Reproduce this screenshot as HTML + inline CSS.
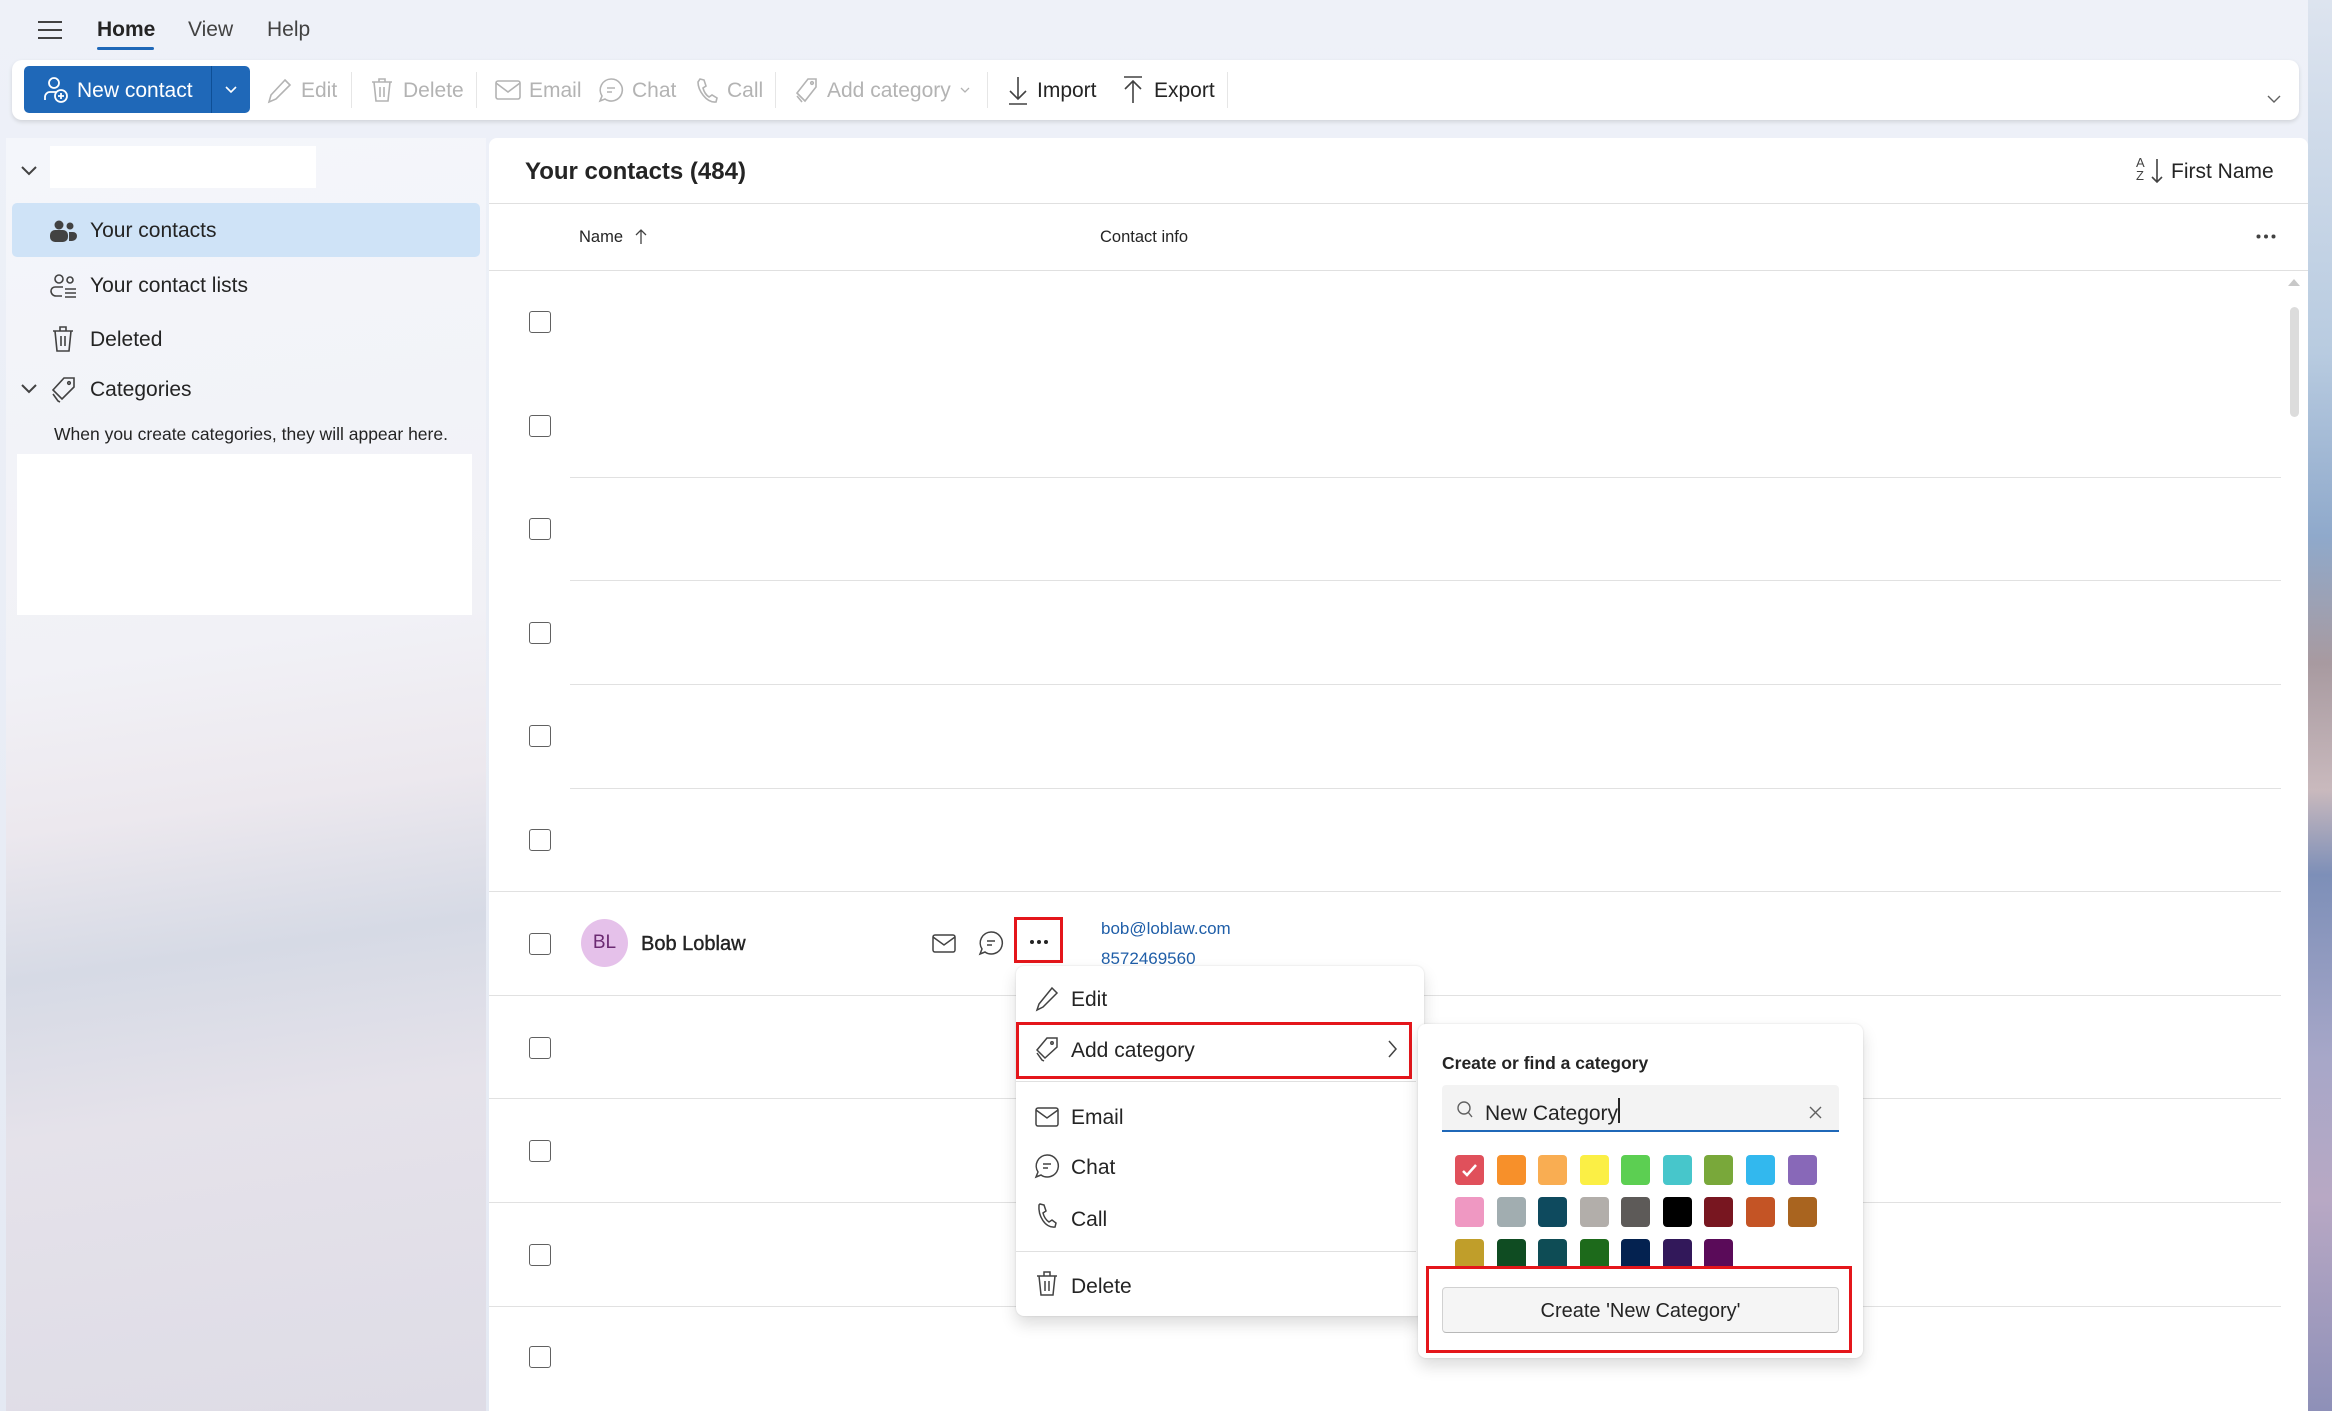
<!DOCTYPE html>
<html><head><meta charset="utf-8"><style>
*{box-sizing:border-box;margin:0;padding:0}
body{width:2332px;height:1411px;overflow:hidden;position:relative;font-family:"Segoe UI","Liberation Sans",sans-serif;color:#242424;background:linear-gradient(180deg,#eef1f8 0%,#e4e9f3 100%)}
.a{position:absolute}
.t{position:absolute;white-space:nowrap;line-height:1}
.dis{color:#b3b3b3}
svg{position:absolute;overflow:visible}
.row{position:absolute;left:489px;width:1792px;height:1px;background:#e1e1e1}
.row.s{left:570px;width:1711px}
.cb{position:absolute;left:529px;width:22px;height:22px;border:1.5px solid #616161;border-radius:3px;background:#fff}
.sw{position:absolute;width:29px;height:30px;border-radius:4px}
.mi{font-size:21px}
</style></head><body>
<div class="a" style="left:2308px;top:0;width:24px;height:1411px;background:linear-gradient(180deg,#dde4ef 0%,#b8cbe0 25%,#8fa9cb 38%,#a89aa0 47%,#c9b9bd 56%,#7d8fb8 62%,#a7a7c8 75%,#b8a8c4 85%,#8e90b8 100%)"></div>
<div class="a" style="left:38px;top:21px;width:24px;height:2px;background:#424242"></div>
<div class="a" style="left:38px;top:29px;width:24px;height:2px;background:#424242"></div>
<div class="a" style="left:38px;top:37px;width:24px;height:2px;background:#424242"></div>
<div class="t" style="left:97px;top:19px;font-size:21px;font-weight:600">Home</div>
<div class="a" style="left:97px;top:47px;width:57px;height:3px;border-radius:2px;background:#1f68b8"></div>
<div class="t" style="left:188px;top:19px;font-size:21px;color:#424242">View</div>
<div class="t" style="left:267px;top:19px;font-size:21px;color:#424242">Help</div>
<div class="a" style="left:12px;top:60px;width:2287px;height:60px;background:#fff;border-radius:10px;box-shadow:0 2px 4px rgba(0,0,0,.12)"></div>
<div class="a" style="left:24px;top:66px;width:226px;height:47px;background:#1f68b8;border-radius:5px"></div>
<div class="a" style="left:211px;top:66px;width:1px;height:47px;background:#0e4f96"></div>
<svg style="left:42px;top:76px" width="28" height="28" viewBox="0 0 28 28" fill="none" stroke="#fff" stroke-width="1.8"><circle cx="12" cy="7" r="5"/><path d="M3 24v-3a5 5 0 0 1 5-5h6"/><circle cx="19" cy="20" r="6" fill="#1f68b8"/><path d="M19 17v6M16 20h6"/></svg>
<div class="t" style="left:77px;top:80px;font-size:21px;color:#fff">New contact</div>
<svg style="left:225px;top:86px" width="12" height="8" viewBox="0 0 12 8" fill="none" stroke="#fff" stroke-width="1.6"><path d="M1 1l5 5 5-5"/></svg>
<svg style="left:267px;top:77px" width="26" height="28" viewBox="0 0 26 28" fill="none" stroke="#b3b3b3" stroke-width="1.6"><path d="M18 3l5 5L9 22l-7 3 2-7z"/></svg>
<div class="t dis" style="left:301px;top:80px;font-size:21px">Edit</div>
<div class="a" style="left:351px;top:72px;width:1px;height:36px;background:#e6e6e6"></div>
<svg style="left:370px;top:76px" width="24" height="28" viewBox="0 0 24 28" fill="none" stroke="#b3b3b3" stroke-width="1.6"><path d="M2 6h20M9 6V3h6v3M4 6l2 19h12l2-19M10 11v10M14 11v10"/></svg>
<div class="t dis" style="left:403px;top:80px;font-size:21px">Delete</div>
<div class="a" style="left:476px;top:72px;width:1px;height:36px;background:#e6e6e6"></div>
<svg style="left:495px;top:80px" width="26" height="20" viewBox="0 0 26 20" fill="none" stroke="#b3b3b3" stroke-width="1.6"><rect x="1" y="1" width="24" height="18" rx="2"/><path d="M1 3l12 9 12-9"/></svg>
<div class="t dis" style="left:529px;top:80px;font-size:21px">Email</div>
<svg style="left:598px;top:77px" width="26" height="26" viewBox="0 0 26 26" fill="none" stroke="#b3b3b3" stroke-width="1.6"><path d="M13 2a11 11 0 1 1-6 20l-5 2 2-5A11 11 0 0 1 13 2z"/><path d="M9 11h8M9 15h5"/></svg>
<div class="t dis" style="left:632px;top:80px;font-size:21px">Chat</div>
<svg style="left:695px;top:77px" width="24" height="28" viewBox="0 0 24 28" fill="none" stroke="#b3b3b3" stroke-width="1.6"><path d="M5 2l4 1 2 6-3 2c1 4 3 7 6 9l3-2 5 3-1 4c-10 1-18-12-18-20z"/></svg>
<div class="t dis" style="left:727px;top:80px;font-size:21px">Call</div>
<div class="a" style="left:775px;top:72px;width:1px;height:36px;background:#e6e6e6"></div>
<svg style="left:794px;top:77px" width="26" height="28" viewBox="0 0 26 28" fill="none" stroke="#b3b3b3" stroke-width="1.6"><path d="M14 2h8v8L11 24 3 16z"/><circle cx="18" cy="6" r="1.3"/><path d="M3 19l5 6"/></svg>
<div class="t dis" style="left:827px;top:80px;font-size:21px">Add category</div>
<svg style="left:960px;top:87px" width="10" height="6" viewBox="0 0 10 6" fill="none" stroke="#b3b3b3" stroke-width="1.3"><path d="M1 1l4 4 4-4"/></svg>
<div class="a" style="left:987px;top:72px;width:1px;height:36px;background:#e6e6e6"></div>
<svg style="left:1007px;top:75px" width="22" height="30" viewBox="0 0 22 30" fill="none" stroke="#424242" stroke-width="1.6"><path d="M11 2v22M3 16l8 8 8-8M2 29h18"/></svg>
<div class="t" style="left:1037px;top:80px;font-size:21px">Import</div>
<svg style="left:1122px;top:75px" width="22" height="30" viewBox="0 0 22 30" fill="none" stroke="#424242" stroke-width="1.6"><path d="M2 2h18M11 6v22M3 14l8-8 8 8"/></svg>
<div class="t" style="left:1154px;top:80px;font-size:21px">Export</div>
<div class="a" style="left:1227px;top:72px;width:1px;height:36px;background:#e6e6e6"></div>
<svg style="left:2267px;top:95px" width="14" height="8" viewBox="0 0 14 8" fill="none" stroke="#616161" stroke-width="1.4"><path d="M1 1l6 6 6-6"/></svg>
<div class="a" style="left:6px;top:138px;width:480px;height:1273px;background:linear-gradient(172deg,#f4f6fb 0%,#f1f1f6 40%,#ece8ee 52%,#d6dae5 63%,#e5e2ea 75%,#dedce6 100%)"></div>
<svg style="left:21px;top:166px" width="16" height="10" viewBox="0 0 16 10" fill="none" stroke="#424242" stroke-width="2"><path d="M1 1l7 7 7-7"/></svg>
<div class="a" style="left:50px;top:146px;width:266px;height:42px;background:#fff"></div>
<div class="a" style="left:12px;top:203px;width:468px;height:54px;background:#cfe3f7;border-radius:5px"></div>
<svg style="left:50px;top:220px" width="27" height="22" viewBox="0 0 27 22" fill="#424242"><circle cx="9" cy="5" r="4.5"/><circle cx="20" cy="6" r="3.5"/><path d="M0 15a5 5 0 0 1 5-5h8a5 5 0 0 1 5 5v2a5 5 0 0 1-5 5H5a5 5 0 0 1-5-5z"/><path d="M19 12h4a4 4 0 0 1 4 4 5 5 0 0 1-5 5h-3z"/></svg>
<div class="t" style="left:90px;top:220px;font-size:21px">Your contacts</div>
<svg style="left:50px;top:274px" width="27" height="24" viewBox="0 0 27 24" fill="none" stroke="#424242" stroke-width="1.6"><circle cx="9" cy="5" r="4"/><circle cx="20" cy="6" r="3"/><path d="M12 22H6a5 5 0 0 1-5-5 4 4 0 0 1 4-4h8"/><path d="M15 15h11M15 19h11M15 23h11"/></svg>
<div class="t" style="left:90px;top:275px;font-size:21px">Your contact lists</div>
<svg style="left:52px;top:325px" width="22" height="28" viewBox="0 0 22 28" fill="none" stroke="#424242" stroke-width="1.6"><path d="M1 6h20M8 6V2h6v4M3 6l2 20h12l2-20M9 11v10M13 11v10"/></svg>
<div class="t" style="left:90px;top:329px;font-size:21px">Deleted</div>
<svg style="left:21px;top:384px" width="16" height="10" viewBox="0 0 16 10" fill="none" stroke="#424242" stroke-width="2"><path d="M1 1l7 7 7-7"/></svg>
<svg style="left:51px;top:377px" width="25" height="27" viewBox="0 0 25 27" fill="none" stroke="#424242" stroke-width="1.6"><path d="M13 1h10v9L11 22 2 13z"/><circle cx="18" cy="6" r="1.3"/><path d="M2 17l5 7 2 1"/></svg>
<div class="t" style="left:90px;top:379px;font-size:21px">Categories</div>
<div class="t" style="left:54px;top:426px;font-size:17.5px">When you create categories, they will appear here.</div>
<div class="a" style="left:17px;top:454px;width:455px;height:161px;background:#fff"></div>
<div class="a" style="left:489px;top:138px;width:1819px;height:1273px;background:#fff;border-radius:8px 8px 0 0"></div>
<div class="t" style="left:525px;top:160px;font-size:24px;font-weight:600">Your contacts (484)</div>
<div class="t" style="left:2136px;top:156px;font-size:13px;line-height:13px;color:#424242">A<br>Z</div>
<svg style="left:2151px;top:158px" width="12" height="26" viewBox="0 0 12 26" fill="none" stroke="#424242" stroke-width="1.6"><path d="M6 1v23M1 19l5 5 5-5"/></svg>
<div class="t" style="left:2171px;top:161px;font-size:21px">First Name</div>
<div class="a" style="left:489px;top:203px;width:1819px;height:1px;background:#e0e0e0"></div>
<div class="t" style="left:579px;top:229px;font-size:16.5px">Name</div>
<svg style="left:635px;top:229px" width="12" height="16" viewBox="0 0 12 16" fill="none" stroke="#424242" stroke-width="1.3"><path d="M6 15V1M1 6l5-5 5 5"/></svg>
<div class="t" style="left:1100px;top:229px;font-size:16.5px">Contact info</div>
<svg style="left:2256px;top:234px" width="20" height="5" viewBox="0 0 20 5" fill="#424242"><circle cx="2.5" cy="2.5" r="2"/><circle cx="10" cy="2.5" r="2"/><circle cx="17.5" cy="2.5" r="2"/></svg>
<div class="a" style="left:489px;top:270px;width:1819px;height:1px;background:#e0e0e0"></div>
<svg style="left:2288px;top:279px" width="12" height="7" viewBox="0 0 12 7"><path d="M0 7L6 0l6 7z" fill="#c8c8c8"/></svg>
<div class="a" style="left:2290px;top:307px;width:9px;height:110px;border-radius:5px;background:#dcdcdc"></div>
<div class="row s" style="top:477px"></div>
<div class="row s" style="top:580px"></div>
<div class="row s" style="top:684px"></div>
<div class="row s" style="top:788px"></div>
<div class="row" style="top:891px"></div>
<div class="row" style="top:995px"></div>
<div class="row" style="top:1098px"></div>
<div class="row" style="top:1202px"></div>
<div class="row" style="top:1306px"></div>
<div class="cb" style="top:311px"></div>
<div class="cb" style="top:415px"></div>
<div class="cb" style="top:518px"></div>
<div class="cb" style="top:622px"></div>
<div class="cb" style="top:725px"></div>
<div class="cb" style="top:829px"></div>
<div class="cb" style="top:933px"></div>
<div class="cb" style="top:1037px"></div>
<div class="cb" style="top:1140px"></div>
<div class="cb" style="top:1244px"></div>
<div class="cb" style="top:1346px"></div>
<div class="a" style="left:581px;top:919px;width:47px;height:48px;border-radius:50%;background:#e5c1ea"></div>
<div class="t" style="left:581px;top:933px;width:47px;text-align:center;font-size:19px;color:#6b2a72">BL</div>
<div class="t" style="left:641px;top:934px;font-size:20px;color:#242424;-webkit-text-stroke:0.4px #242424">Bob Loblaw</div>
<svg style="left:932px;top:934px" width="24" height="19" viewBox="0 0 24 19" fill="none" stroke="#424242" stroke-width="1.5"><rect x="1" y="1" width="22" height="17" rx="2"/><path d="M1 3l11 8 11-8"/></svg>
<svg style="left:979px;top:931px" width="24" height="25" viewBox="0 0 24 25" fill="none" stroke="#424242" stroke-width="1.5"><path d="M12 1a11 11 0 1 1-6 20L1 23l2-5A11 11 0 0 1 12 1z"/><path d="M8 10h8M8 14h5"/></svg>
<div class="a" style="left:1014px;top:917px;width:49px;height:46px;border:3px solid #e4161b"></div>
<svg style="left:1030px;top:940px" width="18" height="4" viewBox="0 0 18 4" fill="#242424"><circle cx="2" cy="2" r="2"/><circle cx="9" cy="2" r="2"/><circle cx="16" cy="2" r="2"/></svg>
<div class="t" style="left:1101px;top:920px;font-size:17px;color:#1f5ea8">bob@loblaw.com</div>
<div class="t" style="left:1101px;top:950px;font-size:17px;color:#1f5ea8">8572469560</div>
<div class="a" style="left:1070px;top:1332px;width:240px;height:16px;background:#fff"></div>
<div class="a" style="left:1016px;top:966px;width:408px;height:350px;background:#fff;border-radius:8px;box-shadow:0 8px 16px rgba(0,0,0,.14),0 0 2px rgba(0,0,0,.12)"></div>
<svg style="left:1035px;top:986px" width="24" height="26" viewBox="0 0 24 26" fill="none" stroke="#424242" stroke-width="1.5"><path d="M17 2l5 5L8 21l-6 3 2-6z"/></svg>
<div class="t mi" style="left:1071px;top:989px">Edit</div>
<div class="a" style="left:1016px;top:1022px;width:396px;height:57px;border:3px solid #e4161b"></div>
<svg style="left:1035px;top:1037px" width="24" height="26" viewBox="0 0 24 26" fill="none" stroke="#424242" stroke-width="1.5"><path d="M12 1h10v9L10 21 2 13z"/><circle cx="17" cy="6" r="1.2"/><path d="M2 16l5 7 2 1"/></svg>
<div class="t mi" style="left:1071px;top:1040px">Add category</div>
<svg style="left:1388px;top:1040px" width="9" height="18" viewBox="0 0 9 18" fill="none" stroke="#424242" stroke-width="1.5"><path d="M1 1l7 8-7 8"/></svg>
<div class="a" style="left:1016px;top:1081px;width:400px;height:1px;background:#e0e0e0"></div>
<svg style="left:1035px;top:1107px" width="24" height="20" viewBox="0 0 24 20" fill="none" stroke="#424242" stroke-width="1.5"><rect x="1" y="1" width="22" height="18" rx="2"/><path d="M1 3l11 8 11-8"/></svg>
<div class="t mi" style="left:1071px;top:1107px">Email</div>
<svg style="left:1035px;top:1154px" width="24" height="25" viewBox="0 0 24 25" fill="none" stroke="#424242" stroke-width="1.5"><path d="M12 1a11 11 0 1 1-6 20L1 23l2-5A11 11 0 0 1 12 1z"/><path d="M8 10h8M8 14h5"/></svg>
<div class="t mi" style="left:1071px;top:1157px">Chat</div>
<svg style="left:1036px;top:1203px" width="22" height="27" viewBox="0 0 22 27" fill="none" stroke="#424242" stroke-width="1.5"><path d="M4 1l4 1 2 6-3 2c1 4 3 7 6 9l3-2 4 3-1 4C9 25 2 13 3 2z"/></svg>
<div class="t mi" style="left:1071px;top:1209px">Call</div>
<div class="a" style="left:1016px;top:1251px;width:400px;height:1px;background:#e0e0e0"></div>
<svg style="left:1036px;top:1270px" width="22" height="27" viewBox="0 0 22 27" fill="none" stroke="#424242" stroke-width="1.5"><path d="M1 6h20M8 6V2h6v4M3 6l2 19h12l2-19M9 11v10M13 11v10"/></svg>
<div class="t mi" style="left:1071px;top:1276px">Delete</div>
<div class="a" style="left:1418px;top:1024px;width:445px;height:334px;background:#fff;border-radius:8px;box-shadow:0 8px 16px rgba(0,0,0,.14),0 0 2px rgba(0,0,0,.12)"></div>
<div class="t" style="left:1442px;top:1055px;font-size:17.5px;font-weight:600">Create or find a category</div>
<div class="a" style="left:1442px;top:1085px;width:397px;height:47px;background:#f3f3f3;border-radius:4px 4px 0 0;border-bottom:2px solid #1f68b8"></div>
<svg style="left:1457px;top:1101px" width="16" height="17" viewBox="0 0 16 17" fill="none" stroke="#616161" stroke-width="1.4"><circle cx="7" cy="7" r="6"/><path d="M11 11l4 5"/></svg>
<div class="t" style="left:1485px;top:1103px;font-size:21px">New Category</div>
<div class="a" style="left:1618px;top:1098px;width:2px;height:25px;background:#242424"></div>
<svg style="left:1809px;top:1106px" width="13" height="13" viewBox="0 0 13 13" fill="none" stroke="#616161" stroke-width="1.4"><path d="M1 1l11 11M12 1L1 12"/></svg>
<div class="sw" style="left:1455px;top:1155px;background:#e0505b"></div>
<svg style="left:1462px;top:1164px" width="15" height="13" viewBox="0 0 15 13" fill="none" stroke="#fff" stroke-width="2.5"><path d="M1 7l4 4 9-10"/></svg>
<div class="sw" style="left:1497px;top:1155px;background:#f7902a"></div>
<div class="sw" style="left:1538px;top:1155px;background:#f9ad52"></div>
<div class="sw" style="left:1580px;top:1155px;background:#fbef45"></div>
<div class="sw" style="left:1621px;top:1155px;background:#5ccf52"></div>
<div class="sw" style="left:1663px;top:1155px;background:#47c6cb"></div>
<div class="sw" style="left:1704px;top:1155px;background:#79a83a"></div>
<div class="sw" style="left:1746px;top:1155px;background:#32b8ee"></div>
<div class="sw" style="left:1788px;top:1155px;background:#8868b8"></div>
<div class="sw" style="left:1455px;top:1197px;background:#ef98c2"></div>
<div class="sw" style="left:1497px;top:1197px;background:#a1adb0"></div>
<div class="sw" style="left:1538px;top:1197px;background:#0e4a5e"></div>
<div class="sw" style="left:1580px;top:1197px;background:#b2aeaa"></div>
<div class="sw" style="left:1621px;top:1197px;background:#5d5a58"></div>
<div class="sw" style="left:1663px;top:1197px;background:#000"></div>
<div class="sw" style="left:1704px;top:1197px;background:#781620"></div>
<div class="sw" style="left:1746px;top:1197px;background:#c45425"></div>
<div class="sw" style="left:1788px;top:1197px;background:#a9641f"></div>
<div class="sw" style="left:1455px;top:1239px;height:27px;border-radius:4px 4px 0 0;background:#c09e2a"></div>
<div class="sw" style="left:1497px;top:1239px;height:27px;border-radius:4px 4px 0 0;background:#0f4c22"></div>
<div class="sw" style="left:1538px;top:1239px;height:27px;border-radius:4px 4px 0 0;background:#0e4c55"></div>
<div class="sw" style="left:1580px;top:1239px;height:27px;border-radius:4px 4px 0 0;background:#1d6a1b"></div>
<div class="sw" style="left:1621px;top:1239px;height:27px;border-radius:4px 4px 0 0;background:#042250"></div>
<div class="sw" style="left:1663px;top:1239px;height:27px;border-radius:4px 4px 0 0;background:#32185a"></div>
<div class="sw" style="left:1704px;top:1239px;height:27px;border-radius:4px 4px 0 0;background:#5a0b59"></div>
<div class="a" style="left:1426px;top:1266px;width:426px;height:87px;border:3px solid #e4161b"></div>
<div class="a" style="left:1442px;top:1287px;width:397px;height:46px;background:#f5f5f5;border:1px solid #d1d1d1;border-bottom-color:#b8b8b8;border-radius:4px"></div>
<div class="t" style="left:1442px;top:1301px;width:397px;text-align:center;font-size:20px">Create 'New Category'</div>
</body></html>
